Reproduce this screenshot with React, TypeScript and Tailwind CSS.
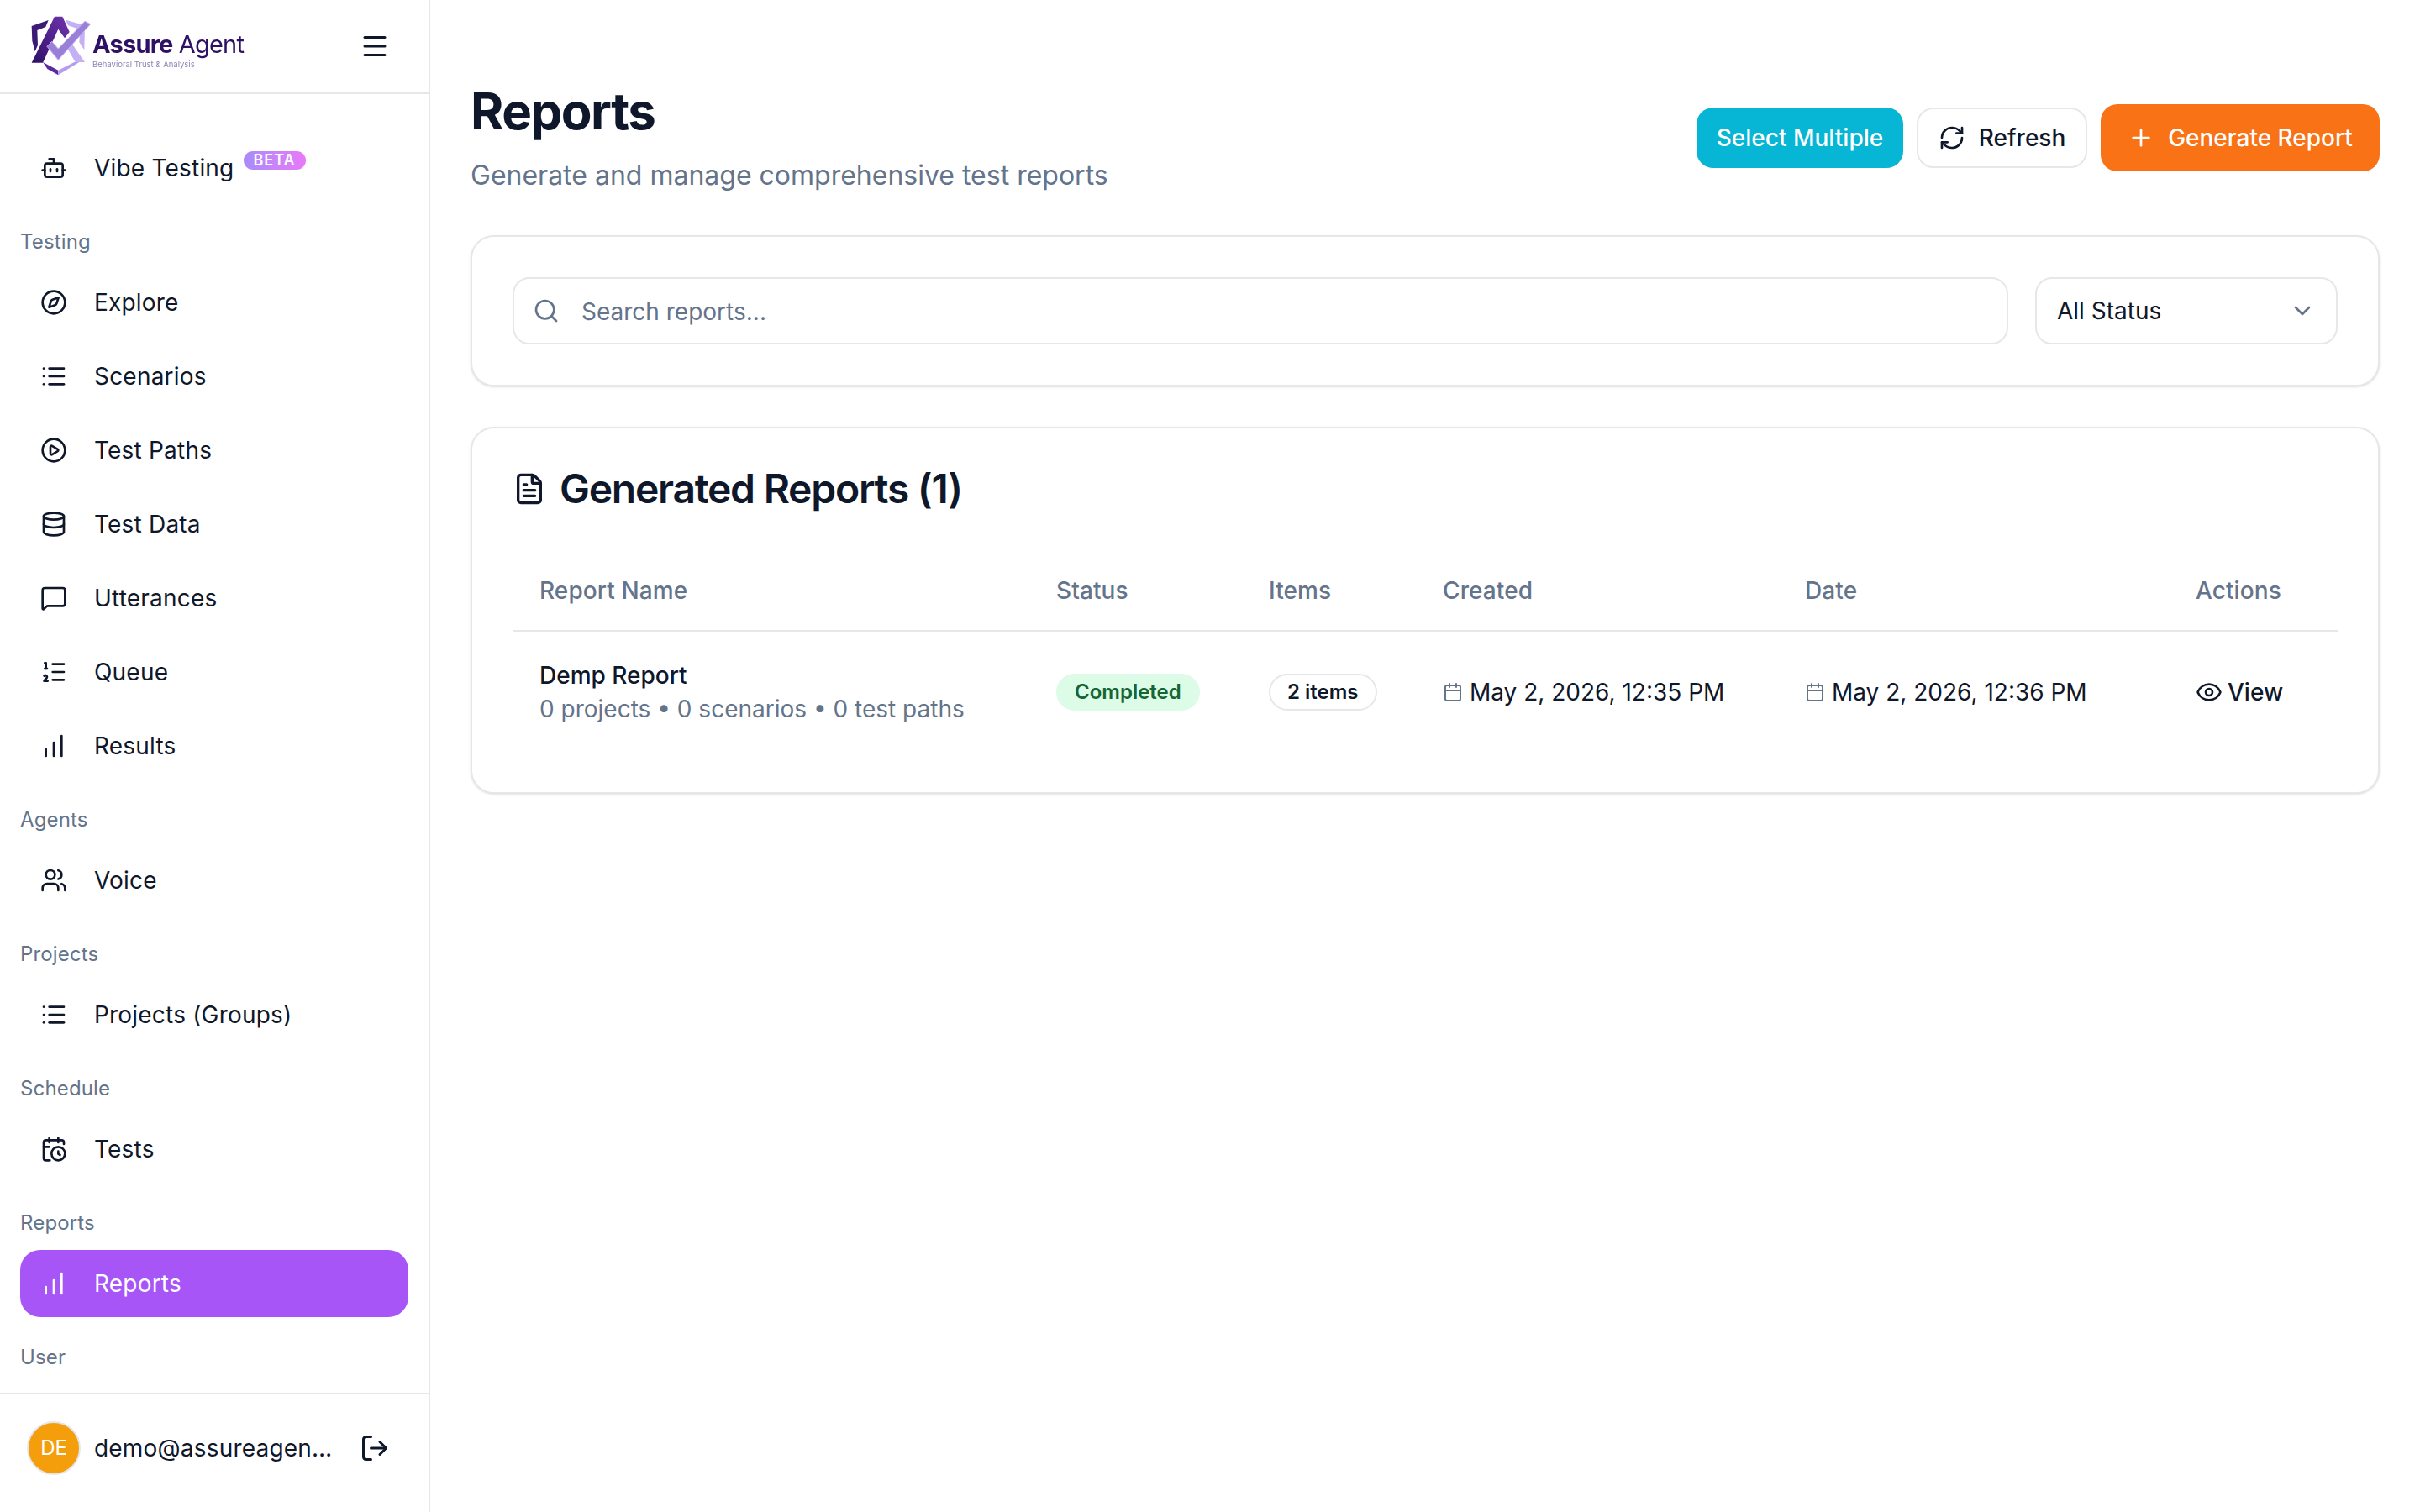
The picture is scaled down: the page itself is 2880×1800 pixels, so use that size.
import React from "react";
import {
  Bot,
  Calendar,
  CalendarClock,
  ChartNoAxesColumnIncreasing,
  ChevronDown,
  CirclePlay,
  Compass,
  Database,
  Eye,
  FileText,
  List,
  ListOrdered,
  LogOut,
  Menu,
  MessageSquare,
  Plus,
  RefreshCw,
  Search,
  Users,
} from "lucide-react";

type NavItem = { name: string; icon: React.ElementType; active?: boolean };
type NavGroup = { label: string; items: NavItem[] };

const groups: NavGroup[] = [
  {
    label: "Testing",
    items: [
      { name: "Explore", icon: Compass },
      { name: "Scenarios", icon: List },
      { name: "Test Paths", icon: CirclePlay },
      { name: "Test Data", icon: Database },
      { name: "Utterances", icon: MessageSquare },
      { name: "Queue", icon: ListOrdered },
      { name: "Results", icon: ChartNoAxesColumnIncreasing },
    ],
  },
  { label: "Agents", items: [{ name: "Voice", icon: Users }] },
  { label: "Projects", items: [{ name: "Projects (Groups)", icon: List }] },
  { label: "Schedule", items: [{ name: "Tests", icon: CalendarClock }] },
  {
    label: "Reports",
    items: [{ name: "Reports", icon: ChartNoAxesColumnIncreasing, active: true }],
  },
  { label: "User", items: [] },
];

function Logo() {
  return (
    <div className="flex items-center pl-[36px] blur-[0.4px]">
      <svg width="74" height="74" viewBox="105 58 222 222" className="shrink-0">
        <defs>
          <linearGradient id="dark" x1="0" y1="1" x2="1" y2="0">
            <stop offset="0" stopColor="#2e1065" />
            <stop offset="1" stopColor="#7134b0" />
          </linearGradient>
        </defs>
        <polygon points="110,97 170,76 160,100 130,112 132,165 122,188 112,150" fill="#3b1a78" />
        <polygon points="192,63 220,63 245,118 228,140 205,108 150,228 110,228" fill="url(#dark)" />
        <polygon points="235,172 250,155 300,226 266,226" fill="#c4b0f5" />
        <polygon points="232,75 300,95 298,182 280,155 283,110 240,95" fill="#c4b0f5" />
        <polygon points="150,226 205,255 205,272 166,250" fill="#5b2a9c" />
        <polygon points="205,255 262,226 280,226 205,272" fill="#b69cf0" />
        <polygon points="165,170 205,218 320,90 300,80 205,178 182,152" fill="#9a7fd6" stroke="#c4b0f5" strokeWidth="3" />
      </svg>
      <div className="mt-[8px] flex flex-col font-['Inter',sans-serif]">
        <div className="text-[29px] leading-[36px] tracking-[-0.8px] text-[#2e1065]">
          <span className="font-bold">Assure</span> <span className="font-normal">Agent</span>
        </div>
        <div className="text-[9.5px] leading-[12px] text-[#8f83b5]">Behavioral Trust &amp; Analysis</div>
      </div>
    </div>
  );
}

function NavRow({ item }: { item: NavItem }) {
  const Icon = item.icon;
  return (
    <div
      className={`flex h-[80px] items-center gap-[32px] rounded-[24px] px-[24px] text-[28px] tracking-[0.2px] ${
        item.active ? "bg-[#a855f7] text-white" : "text-[#0f172a]"
      }`}
    >
      <Icon size={32} strokeWidth={2} className="shrink-0" />
      <span>{item.name}</span>
    </div>
  );
}

function Sidebar() {
  return (
    <aside className="flex h-full w-[512px] shrink-0 flex-col border-r-2 border-[#e5e7eb] bg-white">
      <div className="flex h-[112px] shrink-0 items-center justify-between border-b-2 border-[#e5e7eb] pr-[46px]">
        <Logo />
        <Menu size={36} strokeWidth={2} className="text-[#0f172a]" />
      </div>
      <nav className="flex min-h-0 flex-1 flex-col overflow-hidden px-[24px] pt-[48px]">
        <div className="flex h-[80px] shrink-0 items-center gap-[32px] px-[24px] text-[28px] tracking-[0.2px] text-[#0f172a]">
          <Bot size={32} strokeWidth={2} className="shrink-0" />
          <div className="flex items-center gap-[11px]">
            <span>Vibe Testing</span>
            <span className="mb-[18px] rounded-full bg-gradient-to-r from-[#a78bfa] to-[#e879f9] px-[12px] text-[18px] font-semibold leading-[22px] tracking-[1px] text-white">
              BETA
            </span>
          </div>
        </div>
        {groups.map((group) => (
          <div key={group.label} className="shrink-0">
            <div className="mt-[32px] mb-[16px] h-[32px] text-[24px] leading-[32px] tracking-[0.15px] text-[#64748b]">
              {group.label}
            </div>
            <div className="flex flex-col gap-[8px]">
              {group.items.map((item) => (
                <NavRow key={item.name} item={item} />
              ))}
            </div>
          </div>
        ))}
      </nav>
      <div className="flex h-[142px] shrink-0 items-start border-t-2 border-[#e5e7eb] pl-[32px] pr-[46px] pt-[32px]">
        <div className="flex h-[64px] w-[64px] shrink-0 items-center justify-center rounded-full border-2 border-[#e5e7eb] bg-[#f59e0b] text-[24px] text-white">
          DE
        </div>
        <div className="ml-[16px] mt-[12px] w-[286px] truncate text-[28px] leading-[40px] tracking-[0.2px] text-[#0f172a]">
          demo@assureagent.com
        </div>
        <LogOut size={36} strokeWidth={2} className="ml-auto mt-[14px] shrink-0 text-[#0f172a]" />
      </div>
    </aside>
  );
}

function DateCell({ value }: { value: string }) {
  return (
    <td className="px-[32px] align-middle">
      <div className="flex items-center gap-[8px] text-[28px] text-[#0f172a]">
        <Calendar size={24} strokeWidth={2} className="shrink-0 text-[#64748b]" />
        <span className="whitespace-nowrap">{value}</span>
      </div>
    </td>
  );
}

function App() {
  const columns = ["Report Name", "Status", "Items", "Created", "Date", "Actions"];
  return (
    <div className="flex h-screen w-full overflow-hidden bg-white font-['Inter',sans-serif]">
      <Sidebar />
      <main className="min-w-0 flex-1 px-[48px] pt-[96px]">
        <div className="flex items-start justify-between">
          <div>
            <h1 className="text-[60px] font-bold leading-[72px] tracking-[-1.5px] text-[#0f172a]">Reports</h1>
            <p className="mt-[17px] text-[32px] leading-[48px] text-[#64748b]">
              Generate and manage comprehensive test reports
            </p>
          </div>
          <div className="mt-[28px] flex items-center gap-[16px]">
            <button className="h-[72px] w-[246px] rounded-[20px] bg-[#06b6d4] text-[28px] font-medium text-white">
              Select Multiple
            </button>
            <button className="flex h-[72px] w-[203px] items-center justify-center gap-[16px] rounded-[20px] border-2 border-[#e5e7eb] bg-white text-[28px] font-medium text-[#0f172a]">
              <RefreshCw size={32} strokeWidth={2} />
              Refresh
            </button>
            <button className="flex h-[80px] w-[332px] items-center justify-center gap-[16px] rounded-[20px] bg-[#f97316] text-[28px] font-medium text-white">
              <Plus size={32} strokeWidth={2} />
              Generate Report
            </button>
          </div>
        </div>

        <section className="mt-[47px] flex items-center gap-[32px] rounded-[28px] border-2 border-[#e5e7eb] bg-white p-[48px] shadow-sm">
          <div className="flex h-[80px] flex-1 items-center gap-[26px] rounded-[20px] border-2 border-[#e5e7eb] px-[22px]">
            <Search size={32} strokeWidth={2} className="text-[#64748b]" />
            <span className="pt-[2px] text-[28px] text-[#64748b]">Search reports...</span>
          </div>
          <div className="flex h-[80px] w-[360px] items-center justify-between rounded-[20px] border-2 border-[#e5e7eb] px-[24px] text-[28px] text-[#0f172a]">
            All Status
            <ChevronDown size={32} strokeWidth={2} className="text-[#64748b]" />
          </div>
        </section>

        <section className="mt-[48px] rounded-[28px] border-2 border-[#e5e7eb] bg-white px-[48px] pb-[48px] pt-[48px] shadow-sm">
          <div className="flex h-[48px] items-center gap-[16px]">
            <FileText size={40} strokeWidth={2} className="text-[#0f172a]" />
            <h2 className="text-[48px] font-semibold leading-[48px] tracking-[-1.25px] text-[#0f172a]">
              Generated Reports (1)
            </h2>
          </div>
          <table className="mt-[49px] w-full table-fixed border-collapse">
            <colgroup>
              <col className="w-[615px]" />
              <col className="w-[253px]" />
              <col className="w-[207px]" />
              <col className="w-[431px]" />
              <col className="w-[465px]" />
              <col />
            </colgroup>
            <thead>
              <tr className="h-[96px] border-b-2 border-[#e5e7eb]">
                {columns.map((column) => (
                  <th
                    key={column}
                    className="px-[32px] text-left text-[28px] font-medium tracking-[0.1px] text-[#64748b]"
                  >
                    {column}
                  </th>
                ))}
              </tr>
            </thead>
            <tbody>
              <tr className="h-[144px]">
                <td className="px-[32px] align-middle">
                  <div className="text-[28px] font-medium leading-[40px] text-[#0f172a]">Demp Report</div>
                  <div className="text-[28px] leading-[40px] text-[#64748b]">
                    0 projects • 0 scenarios • 0 test paths
                  </div>
                </td>
                <td className="px-[32px] align-middle">
                  <span className="inline-flex h-[44px] items-center rounded-full bg-[#dcfce7] px-[22px] text-[24px] font-semibold text-[#166534]">
                    Completed
                  </span>
                </td>
                <td className="px-[32px] align-middle">
                  <span className="inline-flex h-[44px] items-center rounded-full border-2 border-[#e5e7eb] px-[20px] text-[24px] font-semibold text-[#0f172a]">
                    2 items
                  </span>
                </td>
                <DateCell value="May 2, 2026, 12:35 PM" />
                <DateCell value="May 2, 2026, 12:36 PM" />
                <td className="px-[32px] align-middle">
                  <div className="flex items-center gap-[6px] text-[28px] font-medium text-[#0f172a]">
                    <Eye size={32} strokeWidth={2} className="shrink-0" />
                    View
                  </div>
                </td>
              </tr>
            </tbody>
          </table>
        </section>
      </main>
    </div>
  );
}

export default App;
